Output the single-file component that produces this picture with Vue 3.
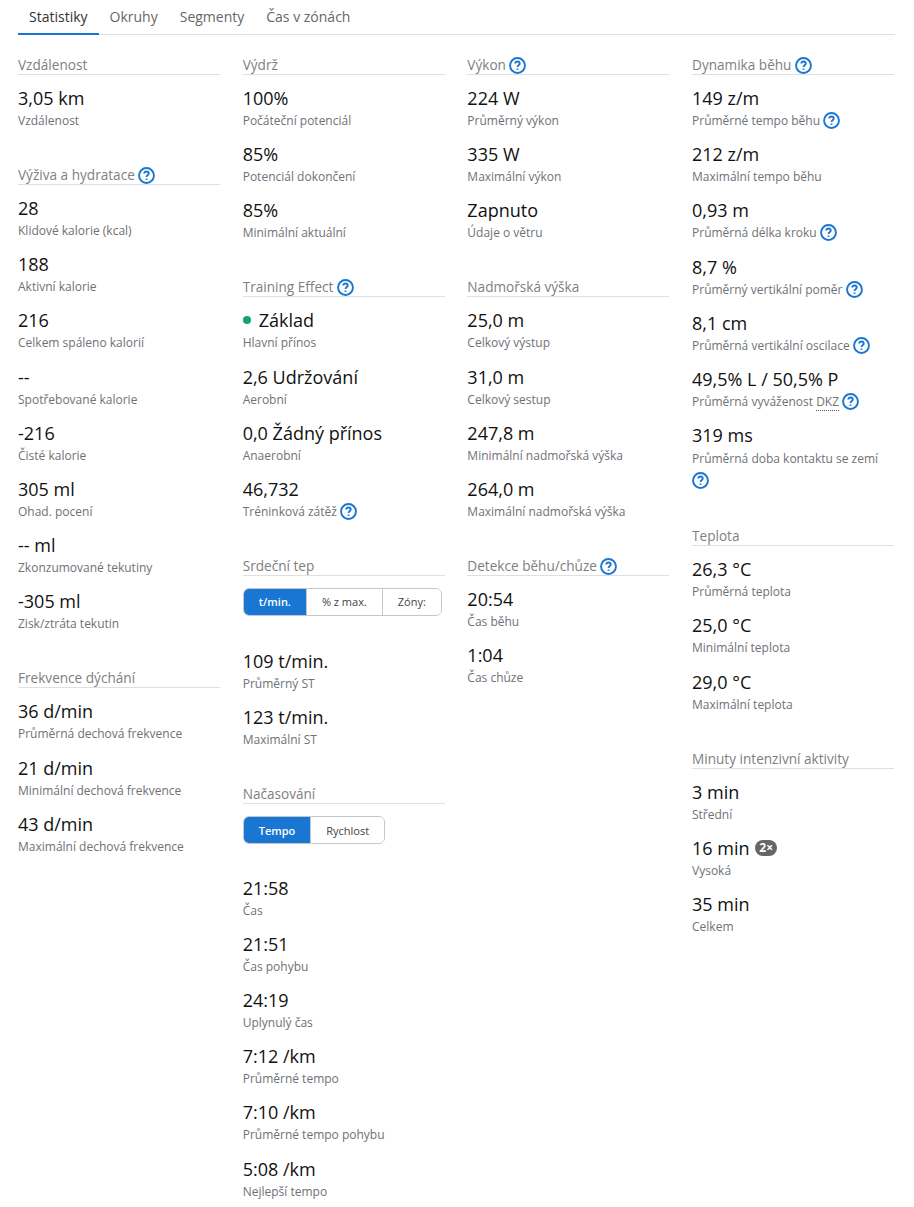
<script setup>
const tabs = ['Statistiky', 'Okruhy', 'Segmenty', 'Čas v zónách'];

const columns = [
  [
    { title: 'Vzdálenost', stats: [{ value: '3,05 km', label: 'Vzdálenost' }] },
    {
      title: 'Výživa a hydratace',
      help: true,
      stats: [
        { value: '28', label: 'Klidové kalorie (kcal)' },
        { value: '188', label: 'Aktivní kalorie' },
        { value: '216', label: 'Celkem spáleno kalorií' },
        { value: '--', label: 'Spotřebované kalorie' },
        { value: '-216', label: 'Čisté kalorie' },
        { value: '305 ml', label: 'Ohad. pocení' },
        { value: '-- ml', label: 'Zkonzumované tekutiny' },
        { value: '-305 ml', label: 'Zisk/ztráta tekutin' },
      ],
    },
    {
      title: 'Frekvence dýchání',
      stats: [
        { value: '36 d/min', label: 'Průměrná dechová frekvence' },
        { value: '21 d/min', label: 'Minimální dechová frekvence' },
        { value: '43 d/min', label: 'Maximální dechová frekvence' },
      ],
    },
  ],
  [
    {
      title: 'Výdrž',
      stats: [
        { value: '100%', label: 'Počáteční potenciál' },
        { value: '85%', label: 'Potenciál dokončení' },
        { value: '85%', label: 'Minimální aktuální' },
      ],
    },
    {
      title: 'Training Effect',
      help: true,
      stats: [
        { value: 'Základ', label: 'Hlavní přínos', dot: true },
        { value: '2,6 Udržování', label: 'Aerobní' },
        { value: '0,0 Žádný přínos', label: 'Anaerobní' },
        { value: '46,732', label: 'Tréninková zátěž', help: true },
      ],
    },
    {
      title: 'Srdeční tep',
      buttons: ['t/min.', '% z max.', 'Zóny:'],
      stats: [
        { value: '109 t/min.', label: 'Průměrný ST' },
        { value: '123 t/min.', label: 'Maximální ST' },
      ],
    },
    {
      title: 'Načasování',
      buttons: ['Tempo', 'Rychlost'],
      stats: [
        { value: '21:58', label: 'Čas' },
        { value: '21:51', label: 'Čas pohybu' },
        { value: '24:19', label: 'Uplynulý čas' },
        { value: '7:12 /km', label: 'Průměrné tempo' },
        { value: '7:10 /km', label: 'Průměrné tempo pohybu' },
        { value: '5:08 /km', label: 'Nejlepší tempo' },
      ],
    },
  ],
  [
    {
      title: 'Výkon',
      help: true,
      stats: [
        { value: '224 W', label: 'Průměrný výkon' },
        { value: '335 W', label: 'Maximální výkon' },
        { value: 'Zapnuto', label: 'Údaje o větru' },
      ],
    },
    {
      title: 'Nadmořská výška',
      stats: [
        { value: '25,0 m', label: 'Celkový výstup' },
        { value: '31,0 m', label: 'Celkový sestup' },
        { value: '247,8 m', label: 'Minimální nadmořská výška' },
        { value: '264,0 m', label: 'Maximální nadmořská výška' },
      ],
    },
    {
      title: 'Detekce běhu/chůze',
      help: true,
      stats: [
        { value: '20:54', label: 'Čas běhu' },
        { value: '1:04', label: 'Čas chůze' },
      ],
    },
  ],
  [
    {
      title: 'Dynamika běhu',
      help: true,
      stats: [
        { value: '149 z/m', label: 'Průměrné tempo běhu', help: true },
        { value: '212 z/m', label: 'Maximální tempo běhu' },
        { value: '0,93 m', label: 'Průměrná délka kroku', help: true },
        { value: '8,7 %', label: 'Průměrný vertikální poměr', help: true },
        { value: '8,1 cm', label: 'Průměrná vertikální oscilace', help: true },
        { value: '49,5% L / 50,5% P', label: 'Průměrná vyváženost', abbr: 'DKZ', help: true },
        { value: '319 ms', label: 'Průměrná doba kontaktu se zemí', help: true, wrapped: true },
      ],
    },
    {
      title: 'Teplota',
      stats: [
        { value: '26,3 °C', label: 'Průměrná teplota' },
        { value: '25,0 °C', label: 'Minimální teplota' },
        { value: '29,0 °C', label: 'Maximální teplota' },
      ],
    },
    {
      title: 'Minuty intenzivní aktivity',
      stats: [
        { value: '3 min', label: 'Střední' },
        { value: '16 min', label: 'Vysoká', badge: '2×' },
        { value: '35 min', label: 'Celkem' },
      ],
    },
  ],
];
</script>

<template>
  <div class="page">
    <nav class="tabs">
      <a v-for="(tab, i) in tabs" :key="tab" class="tab" :class="{ active: i === 0 }">{{ tab }}</a>
    </nav>

    <div class="columns">
      <div v-for="(column, c) in columns" :key="c" class="column">
        <section v-for="section in column" :key="section.title" class="section">
          <h3 class="section-title">
            {{ section.title }}
            <svg v-if="section.help" class="help" viewBox="0 0 16 16">
              <circle cx="8" cy="8" r="7" />
              <path d="M5.9 6.2c0-1.2.9-2 2.1-2s2.1.8 2.1 1.9c0 1.7-2.1 1.7-2.1 3.3" />
              <path d="M8 10.8v1.3" />
            </svg>
          </h3>

          <div v-if="section.buttons" class="btn-group">
            <button v-for="(btn, b) in section.buttons" :key="btn" class="btn" :class="{ active: b === 0 }">{{ btn }}</button>
          </div>

          <div v-for="stat in section.stats" :key="stat.label" class="stat">
            <div class="stat-value">
              <span v-if="stat.dot" class="dot"></span>{{ stat.value }}
              <span v-if="stat.badge" class="badge">{{ stat.badge }}</span>
            </div>
            <div class="stat-label" :class="{ wrapped: stat.wrapped }">
              {{ stat.label }}
              <span v-if="stat.abbr" class="abbr">{{ stat.abbr }}</span>
              <svg v-if="stat.help" class="help" viewBox="0 0 16 16">
                <circle cx="8" cy="8" r="7" />
                <path d="M5.9 6.2c0-1.2.9-2 2.1-2s2.1.8 2.1 1.9c0 1.7-2.1 1.7-2.1 3.3" />
                <path d="M8 10.8v1.3" />
              </svg>
            </div>
          </div>
        </section>
      </div>
    </div>
  </div>
</template>

<style>
html,
body {
  background: #fff;
}
</style>

<style scoped>
.page {
  padding: 0 19px 0 18px;
  font-family: "Open Sans", "Noto Sans", sans-serif;
  color: #111;
}

.tabs {
  display: flex;
  height: 35px;
  border-bottom: 1px solid #dcdfe3;
  box-sizing: border-box;
}

.tab {
  padding: 7px 11px 0;
  font-size: 14px;
  line-height: 20px;
  color: #666;
  box-sizing: border-box;
  height: 35px;
}

.tab.active {
  color: #333;
  border-bottom: 2px solid #1976d2;
}

.columns {
  display: flex;
  gap: 22.7px;
  padding: 20px 1px 0 0;
}

.column {
  flex: 1 1 0;
  min-width: 0;
}

.section {
  margin-bottom: 35px;
}

.section-title {
  height: 19px;
  margin: 0 0 10px;
  font-size: 13.6px;
  line-height: 19px;
  font-weight: 400;
  color: #808080;
  border-bottom: 1px solid #dcdfe3;
}

.help {
  display: inline-block;
  width: 17px;
  height: 17px;
  vertical-align: -4px;
  fill: none;
  stroke: #1976d2;
  stroke-width: 1.8;
}

.btn-group {
  display: inline-flex;
  margin: 2px 0 32px;
  border: 1px solid #c4c8cc;
  border-radius: 6px;
  overflow: hidden;
  vertical-align: top;
}

.section:last-child .btn-group {
  margin-bottom: 30.5px;
}

.btn {
  height: 26px;
  padding: 0 15px;
  border: 0;
  border-left: 1px solid #c4c8cc;
  background: #fff;
  font-family: inherit;
  font-size: 11px;
  color: #444;
}

.btn:first-child {
  border-left: 0;
}

.btn.active {
  background: #1976d2;
  color: #fff;
  font-weight: 600;
}

.stat {
  margin-bottom: 11.2px;
}

.stat-value {
  font-size: 18px;
  line-height: 26px;
  color: #111;
}

.stat-label {
  font-size: 12px;
  line-height: 19px;
  color: #6f7176;
}

.stat-label.wrapped {
  line-height: 22px;
  margin-bottom: -1px;
}

.dot {
  display: inline-block;
  width: 8px;
  height: 8px;
  margin-right: 8px;
  border-radius: 50%;
  background: #0ea573;
  vertical-align: 3px;
}

.badge {
  display: inline-block;
  width: 22px;
  margin-left: 1px;
  border-radius: 8px;
  background: #666;
  color: #fff;
  font-size: 12px;
  font-weight: 700;
  line-height: 16px;
  text-align: center;
  vertical-align: 3px;
}

.abbr {
  margin-right: 3px;
  border-bottom: 1px dotted #555;
}
</style>
